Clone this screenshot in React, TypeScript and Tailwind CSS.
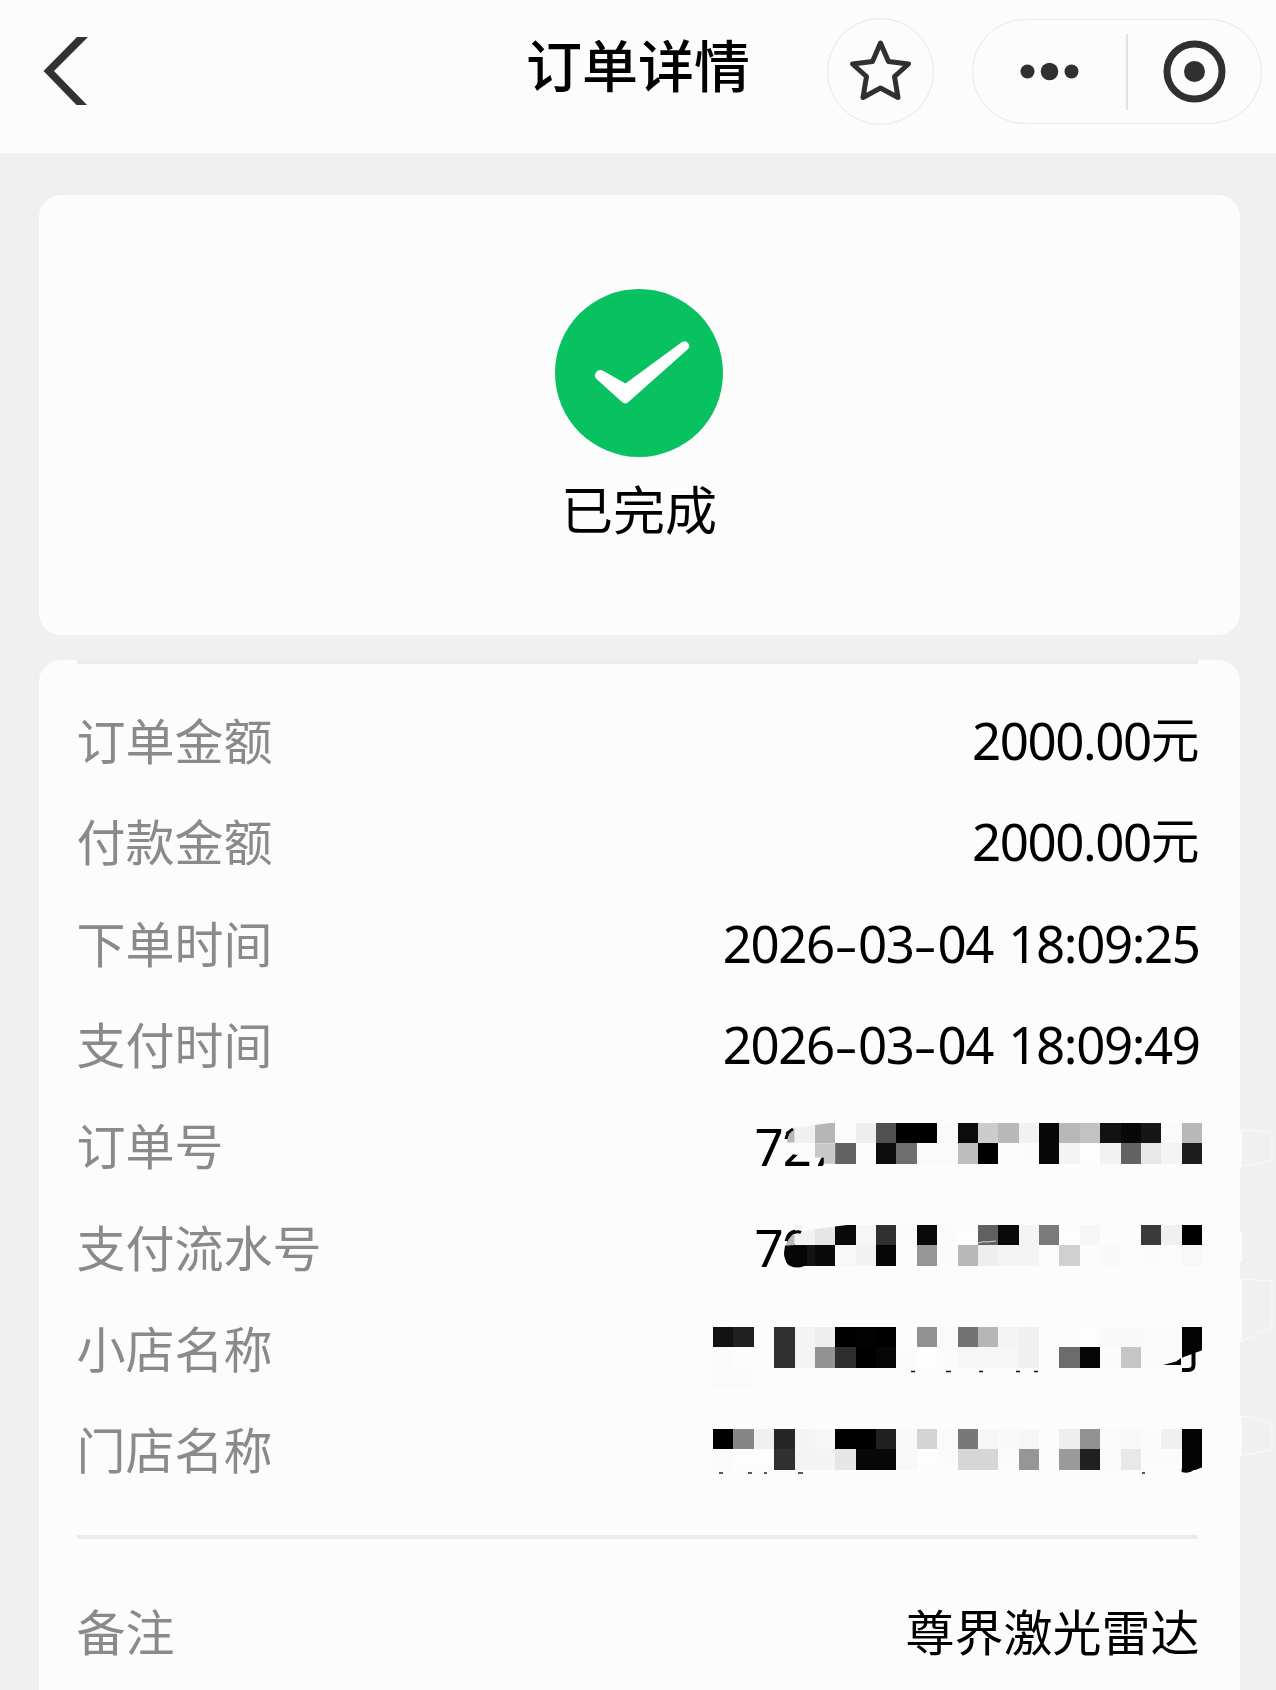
import React from 'react';

type Row = { label: string; value: string };
type MaskedRow = { label: string; prefix: string; offset: string; cells: string[]; smudge?: React.ReactNode };

const ROWS: Row[] = [
  { label: '订单金额', value: '2000.00元' },
  { label: '付款金额', value: '2000.00元' },
  { label: '下单时间', value: '2026-03-04 18:09:25' },
  { label: '支付时间', value: '2026-03-04 18:09:49' },
];

const CELL = 20.375;

// each entry is a grey level, two lines of cells per masked value ('--' leaves a gap)
const MASKED_ROWS: MaskedRow[] = [
  {
    label: '订单号',
    prefix: '727',
    offset: 'top-[28px]',
    cells: [
      '-- -- -- -- f0 b6 fc ee 50 00 00 fa 0c cc b8 f2 08 b8 c2 12 08 16 fa b8',
      '-- -- -- -- -- -- 62 fc 0c 6e fa fa be 00 fc fb 08 f4 fd f2 62 e8 f4 1c',
    ],
    smudge: (
      <>
        <path d="M81.500 -1H123L102 2L81.500 5Z" fill="#fcfcfc" />
        <path d="M79 4H82V20H122V35H110L96 35V30L84 32L74 30L71 17L77 16Z" fill="#fcfcfc" />
        <path d="M74 19.500Q75 8 81.500 5V19.500Z" fill="#b8b8b8" />
        <path d="M102 20.300H122.250V40.700H110.500V34.500H102Z" fill="#c8c8c8" />
        <path d="M105 41.500L109 34.500H110.500V41.500Z" fill="#050505" />
        <path d="M73 16Q74 9 80 6" fill="none" stroke="#050505" strokeWidth="3" />
      </>
    ),
  },
  {
    label: '支付流水号',
    prefix: '78',
    offset: 'top-[29px]',
    cells: [
      '-- -- -- -- f2 e6 0a f6 30 fb 0a fb fd 60 0a f4 7a fd f6 fc fc 3a f0 00',
      '-- -- -- -- 14 0a f8 f2 06 fc 96 fb b8 ee f4 f4 fc d0 fc f9 fc fb fc f8',
    ],
    smudge: (
      <>
        <path d="M89 -1H142L102 4L89 6.500Z" fill="#fcfcfc" />
        <path d="M73 20.400Q75 12 81.500 9V20.400Z" fill="#b8b8b8" />
        <path d="M72 20.400H94V41H83Q71 39 71 28Z" fill="#050505" />
        <path d="M73 16Q75 7.500 83 7Q86 6.500 88 7.500" fill="none" stroke="#050505" strokeWidth="3" />
        <path d="M265 18Q270 16 275 17L283 16" fill="none" stroke="#d8d8d8" strokeWidth="1" />
      </>
    ),
  },
  {
    label: '小店名称',
    prefix: '',
    offset: 'top-[29px]',
    cells: [
      '12 20 fc 30 f4 ee 00 02 00 fc 92 fa 72 b6 f4 f0 fc fc fd f9 f9 fa fb 04',
      'fa fc fc 30 f4 92 2e 00 06 fb fd fb f6 f6 f6 f0 fc 6c 06 fb c6 fb fb 04',
    ],
    smudge: (
      <>
        <path d="M0 41H40V61H0Z" fill="#fafafa" />
        <path d="M468 31L490 23V46H468Z" fill="#fcfcfc" />
        <path d="M450 38L463 34.500L468 31V38Z" fill="#050505" />
        <path d="M480.500 26V38Q480.500 43 475 43H469" fill="none" stroke="#050505" strokeWidth="4" />
        <path d="M198 44.500h4M233 44.500h5M266 44.500h4M303 44.500h4M321 44.500h4" stroke="#111111" strokeWidth="1.500" />
      </>
    ),
  },
  {
    label: '门店名称',
    prefix: '',
    offset: 'top-[30px]',
    cells: [
      '00 86 f0 26 f4 f7 00 00 20 f8 d4 fa 78 f6 f9 f6 fc ee 92 fa f8 fb f0 04',
      'fa fd fd 30 f4 f4 e6 08 08 f8 fd fb d6 d6 fb 96 fc 9a 20 fa e8 fb fb 04',
    ],
    smudge: (
      <>
        <path d="M468.600 40V43Q476 45 481 41L489 38Z" fill="#050505" />
        <path d="M481 41.500L490 38V42H481Z" fill="#fcfcfc" />
        <path d="M6 44h4M35 44h4M51 44h3M85 44h5M429 44h3" stroke="#222222" strokeWidth="1.500" />
      </>
    ),
  },
];

const Value: React.FC<{ text: string }> = ({ text }) => (
  <span className="whitespace-pre font-['Noto_Sans','Noto_Sans_CJK_SC',sans-serif] text-black">
    {text.split(/([-元])/).map((part, i) => {
      if (part === '-') {
        return (
          <span key={i} className="inline-block w-[24px] scale-x-150 text-center text-[48px]">-</span>
        );
      }
      if (part === '元') {
        return <span key={i} className="relative -top-[2px] text-[48.700px]">元</span>;
      }
      return <span key={i} className="text-[51px] tracking-[-1.400px] [word-spacing:3.500px]">{part}</span>;
    })}
  </span>
);

const Mosaic: React.FC<{ row: MaskedRow }> = ({ row }) => (
  <div className="relative -mr-[2px] h-full w-[489px]">
    {row.prefix && (
      <span className="absolute left-[42px] top-px font-['Noto_Sans',sans-serif] text-[51px] leading-[101.300px] tracking-[-1px] text-black">
        {row.prefix}
      </span>
    )}
    <svg
      className={`absolute left-0 ${row.offset} overflow-visible`}
      width="489"
      height="41"
      viewBox="0 0 489 41"
    >
      <g shapeRendering="crispEdges">
        {row.cells.map((line, y) =>
          line.split(' ').map((grey, x) =>
            grey === '--' ? null : (
              <rect
                key={`${x}-${y}`}
                x={x * CELL}
                y={y * CELL}
                width={CELL}
                height={CELL}
                fill={`#${grey}${grey}${grey}`}
              />
            ),
          ),
        )}
      </g>
      {row.smudge}
    </svg>
  </div>
);

const Label: React.FC<{ children: React.ReactNode }> = ({ children }) => (
  <span className="pb-[4px] text-[49px] text-[#8a8a8a]">{children}</span>
);

export default function App() {
  return (
    <div className="flex h-[1690px] w-[1276px] flex-col overflow-hidden bg-[#f0f0f0] font-['Noto_Sans_CJK_SC',sans-serif] leading-none">
      {/* Navigation bar */}
      <header className="grid h-[153px] shrink-0 grid-cols-[1fr_auto_1fr] bg-[#fcfcfc]">
        <div className="pl-[43px] pt-[37px]">
          <svg width="45" height="68" viewBox="0 0 45 68" fill="#323232">
            <path d="M34 0H45L11 34L44 68H33.500L0.500 34Z" />
          </svg>
        </div>
        <h1 className="pt-[34px] text-[56px] font-medium leading-[58px] text-black">订单详情</h1>
        <div className="flex items-start justify-end pr-[14px] pt-[18px]">
          <div className="mr-[38px] flex h-[107px] w-[107px] shrink-0 items-center justify-center rounded-full border border-[#e8e8e8]">
            <svg width="107" height="107" viewBox="0 0 107 107" className="shrink-0" fill="none">
              <path
                d="M53.500 25L61.500 43.500L81.500 46L67.500 58.500L71 79.500L53.500 70L36 79.500L39.500 58.500L25.500 46L45.500 43.500Z"
                stroke="#303030"
                strokeWidth="5"
                strokeLinejoin="round"
              />
            </svg>
          </div>
          <div className="mt-px flex h-[105px] w-[290px] shrink-0 items-center rounded-full border border-[#e8e8e8]">
            <svg width="153" height="76" viewBox="0 0 153 76" fill="#303030">
              <circle cx="54.500" cy="37.500" r="7" />
              <circle cx="76.500" cy="37.500" r="8.800" />
              <circle cx="98.500" cy="37.500" r="7" />
            </svg>
            <div className="h-[76px] w-[2px] bg-[#e2e2e2]" />
            <svg width="133" height="76" viewBox="0 0 133 76">
              <circle cx="66.500" cy="37.500" r="27.500" fill="none" stroke="#303030" strokeWidth="7" />
              <circle cx="66.500" cy="37.500" r="10.500" fill="#303030" />
            </svg>
          </div>
        </div>
      </header>

      {/* Order status */}
      <section className="mx-auto mt-[42px] flex h-[440px] w-[1201px] shrink-0 translate-x-px flex-col items-center rounded-[22px] bg-[#fcfcfc] pt-[94px]">
        <svg width="168" height="168" viewBox="0 0 168 168">
          <circle cx="84" cy="84" r="84" fill="#08c160" />
          <path
            d="M48.500 82L70.500 94.500L127 53Q130.500 51 133 54Q136 57.500 132.500 60.500L74 112.500Q70.500 116 67 113L41.500 90Q38.500 87 41 83.500Q44 79.500 48.500 82Z"
            fill="#ffffff"
          />
        </svg>
        <p className="mt-[25px] text-[52px] leading-[52px] text-black">已完成</p>
      </section>

      {/* Order fields */}
      <section className="relative mx-auto mt-[25px] w-[1201px] grow translate-x-px rounded-t-[22px] bg-[#fcfcfc] pl-[38px] pr-[40px]">
        <div className="mr-[2px] h-[4px] bg-[#ececec]" />
        <div className="pt-[26px]">
          {ROWS.map(row => (
            <div key={row.label} className="flex h-[101.300px] items-center justify-between">
              <Label>{row.label}</Label>
              <Value text={row.value} />
            </div>
          ))}
          {MASKED_ROWS.map(row => (
            <div key={row.label} className="flex h-[101.300px] items-center justify-between">
              <Label>{row.label}</Label>
              <Mosaic row={row} />
            </div>
          ))}
        </div>
        <div className="mr-[2px] mt-[35px] h-[4px] bg-[#ececec]" />
        <div className="mt-[42px] flex h-[101px] items-center justify-between">
          <Label>备注</Label>
          <span className="pb-[4px] text-[49px] text-black">尊界激光雷达</span>
        </div>
        {/* faint eraser strokes past the card edge */}
        <svg className="absolute left-[1201px] top-[460px] overflow-visible" width="36" height="400" viewBox="0 0 36 400" fill="none" stroke="#fafafa">
          <path d="M0 10L18 11L32 13V40L18 44L0 46M0 159L32 161V207L0 222M0 296L18 298L32 305V330L0 336" />
          <path d="M1 10V48M1 112V142M1 159V221M1 296V335" strokeWidth="2" />
        </svg>
      </section>
    </div>
  );
}
